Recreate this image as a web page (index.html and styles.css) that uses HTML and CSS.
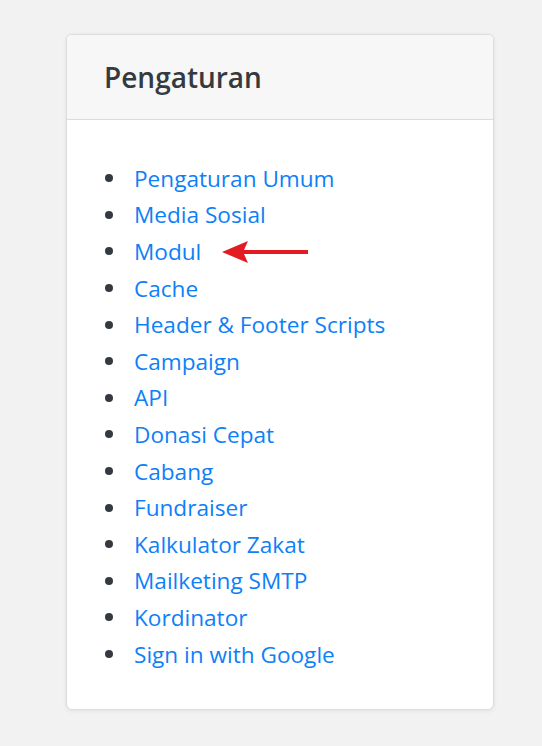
FILE: index.html
```html
<!DOCTYPE html>
<html>
<head>
<meta charset="utf-8">
<link rel="stylesheet" href="styles.css">
</head>
<body>
<div class="page">
  <div class="card">
    <div class="card-header">Pengaturan</div>
    <div class="card-body">
      <ul class="menu">
        <li><a href="#">Pengaturan Umum</a></li>
        <li><a href="#">Media Sosial</a></li>
        <li><a href="#">Modul</a><svg class="arrow" width="86" height="24" viewBox="0 0 86 24"><path d="M0 12 L26 1 L22 10 L86 10 L86 14 L22 14 L26 23 Z" fill="#e31b23"/></svg></li>
        <li><a href="#">Cache</a></li>
        <li><a href="#">Header &amp; Footer Scripts</a></li>
        <li><a href="#">Campaign</a></li>
        <li><a href="#">API</a></li>
        <li><a href="#">Donasi Cepat</a></li>
        <li><a href="#">Cabang</a></li>
        <li><a href="#">Fundraiser</a></li>
        <li><a href="#">Kalkulator Zakat</a></li>
        <li><a href="#">Mailketing SMTP</a></li>
        <li><a href="#">Kordinator</a></li>
        <li><a href="#">Sign in with Google</a></li>
      </ul>
    </div>
  </div>
</div>
</body>
</html>
```
FILE: styles.css
```css
html, body {
  margin: 0;
  padding: 0;
  background: #f2f2f2;
}
body {
  font-family: "Open Sans", "Noto Sans", sans-serif;
  color: #343a40;
}
.page {
  padding: 34px 48px 36px 66px;
}
.card {
  width: 426px;
  background: #fff;
  border: 1px solid #dcdcdc;
  border-radius: 6px;
  box-shadow: 0 1px 5px rgba(0,0,0,0.07);
  overflow: hidden;
}
.card-header {
  background: #f7f7f7;
  border-bottom: 1px solid #dcdcdc;
  height: 84px;
  padding: 0 37px;
  display: flex;
  align-items: center;
  font-size: 28px;
  font-weight: 600;
  color: #343a40;
}
.card-body {
  padding: 40px 28px 37px 38px;
}
.menu {
  margin: 0;
  padding: 0;
  list-style: none;
  font-size: 22.6px;
}
.menu li {
  display: flex;
  align-items: center;
  height: 36.6px;
}
.menu li::before {
  content: "";
  width: 8px;
  height: 8px;
  border-radius: 50%;
  background: #343a40;
  margin-right: 21px;
  flex: none;
}
.menu a {
  color: #0d7ff7;
  text-decoration: none;
}
.arrow {
  margin-left: 21px;
  margin-top: 2px;
}
```
